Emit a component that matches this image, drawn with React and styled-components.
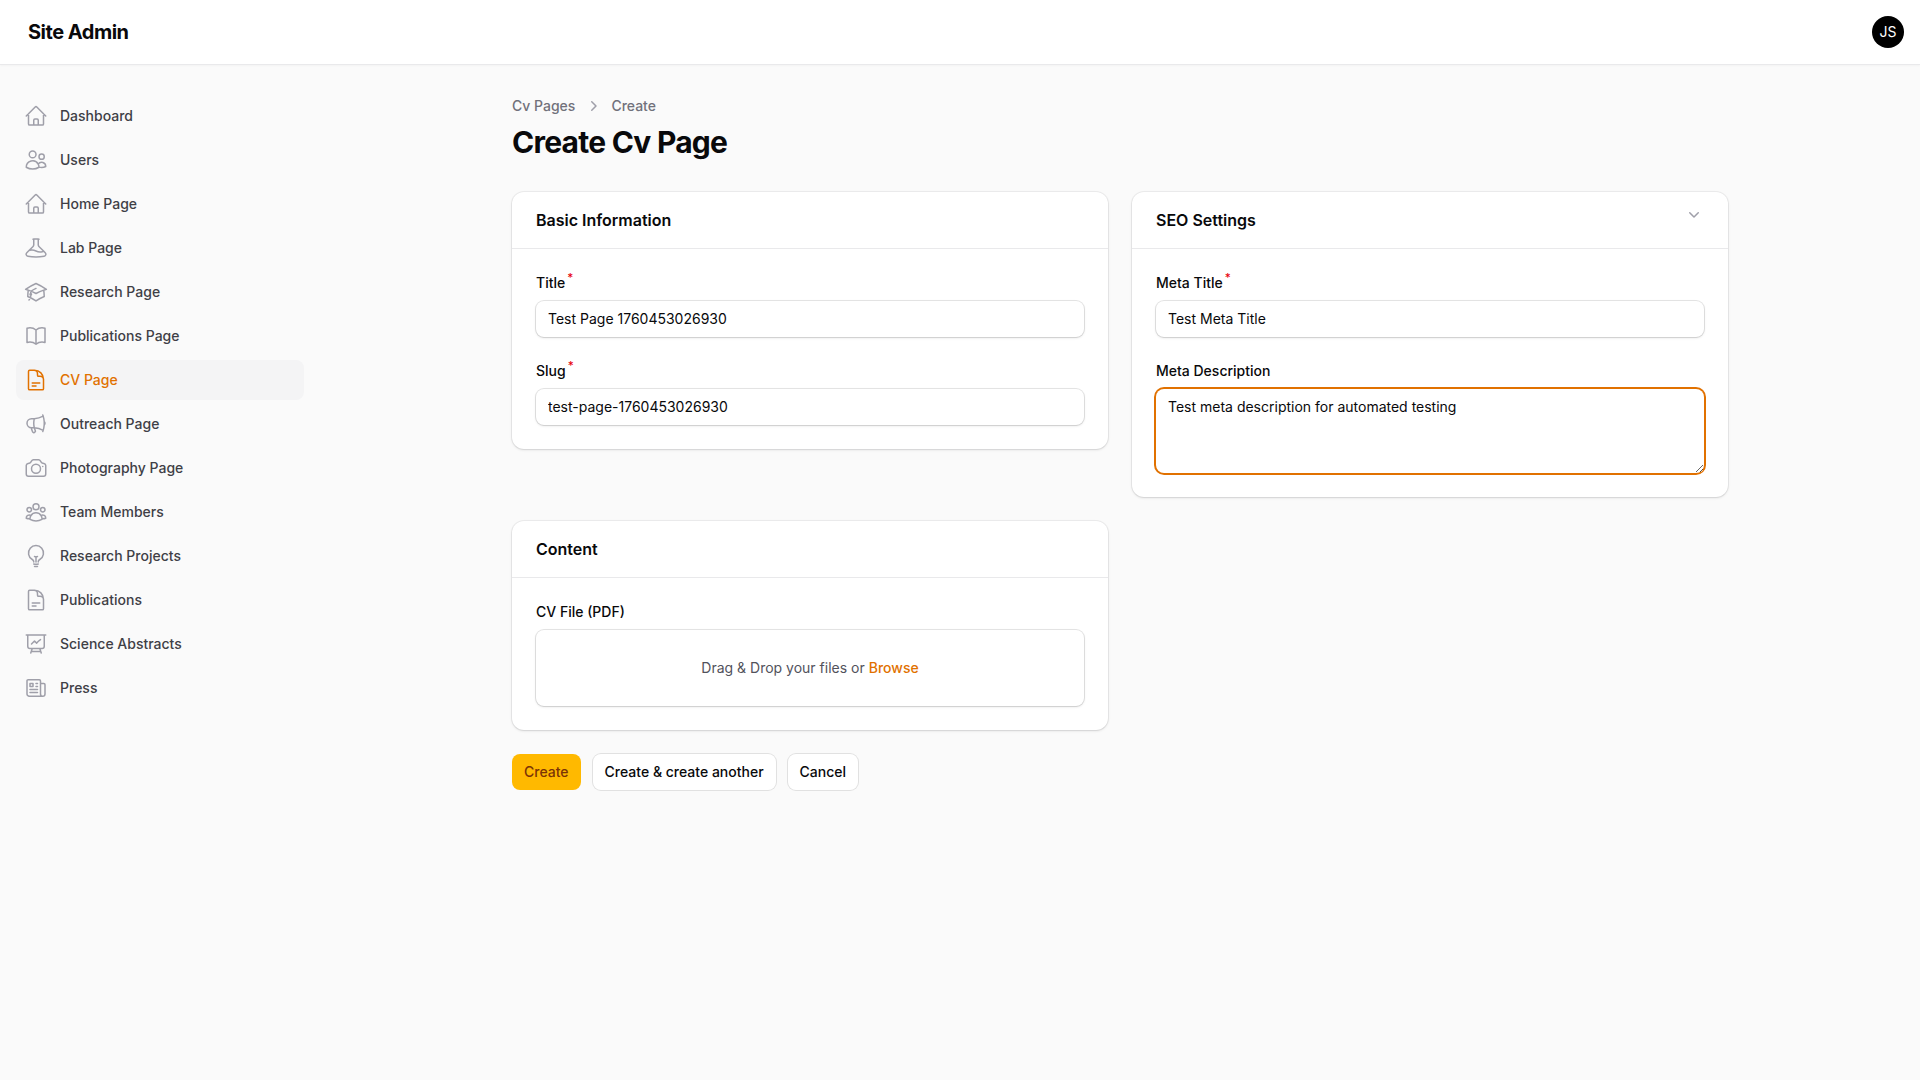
import * as React from 'react';
import styled, { createGlobalStyle } from 'styled-components';
import {
  HiOutlineHome,
  HiOutlineUsers,
  HiOutlineBeaker,
  HiOutlineAcademicCap,
  HiOutlineBookOpen,
  HiOutlineDocumentText,
  HiOutlineMegaphone,
  HiOutlineCamera,
  HiOutlineUserGroup,
  HiOutlineLightBulb,
  HiOutlinePresentationChartLine,
  HiOutlineNewspaper,
  HiMiniChevronRight,
  HiMiniChevronDown,
} from 'react-icons/hi2';

const AMBER = '#e17100';
const SHADOW_SM = '0 1px 3px rgba(0, 0, 0, 0.1), 0 1px 2px -1px rgba(0, 0, 0, 0.1)';

const navItems = [
  { label: 'Dashboard', icon: HiOutlineHome },
  { label: 'Users', icon: HiOutlineUsers },
  { label: 'Home Page', icon: HiOutlineHome },
  { label: 'Lab Page', icon: HiOutlineBeaker },
  { label: 'Research Page', icon: HiOutlineAcademicCap },
  { label: 'Publications Page', icon: HiOutlineBookOpen },
  { label: 'CV Page', icon: HiOutlineDocumentText, active: true },
  { label: 'Outreach Page', icon: HiOutlineMegaphone },
  { label: 'Photography Page', icon: HiOutlineCamera },
  { label: 'Team Members', icon: HiOutlineUserGroup },
  { label: 'Research Projects', icon: HiOutlineLightBulb },
  { label: 'Publications', icon: HiOutlineDocumentText },
  { label: 'Science Abstracts', icon: HiOutlinePresentationChartLine },
  { label: 'Press', icon: HiOutlineNewspaper },
];

const GlobalStyle = createGlobalStyle`
  html, body {
    margin: 0;
    background: #fafafa;
    font-family: Inter, 'Liberation Sans', sans-serif;
    color: #09090b;
  }

  * {
    box-sizing: border-box;
  }
`;

const Page = styled.div`
  min-height: 1080px;
`;

const Topbar = styled.header`
  height: 65px;
  display: flex;
  align-items: center;
  justify-content: space-between;
  padding: 0 16px 1px 28px;
  background: #fff;
  border-bottom: 1px solid #e9e9eb;
  box-shadow: 0 1px 2px rgba(0, 0, 0, 0.03);
`;

const Brand = styled.div`
  font-size: 20px;
  line-height: 20px;
  font-weight: 700;
  letter-spacing: -0.5px;
  color: #09090b;
`;

const Avatar = styled.div`
  width: 32px;
  height: 32px;
  border-radius: 50%;
  display: flex;
  align-items: center;
  justify-content: center;
  background: #000;
  color: #fff;
  font-size: 14px;
  font-weight: 400;
`;

const Shell = styled.div`
  display: grid;
  grid-template-columns: 320px 1fr;
`;

const Sidebar = styled.nav`
  display: flex;
  flex-direction: column;
  gap: 4px;
  padding: 31px 16px;
`;

const NavItem = styled.a`
  height: 40px;
  display: flex;
  align-items: center;
  gap: 12px;
  padding: 0 8px;
  border-radius: 8px;
  font-size: 14px;
  font-weight: 500;
  color: ${p => (p.$active ? AMBER : '#3f3f46')};
  background: ${p => (p.$active ? '#f4f4f5' : 'transparent')};

  svg {
    width: 24px;
    height: 24px;
    flex-shrink: 0;
    color: ${p => (p.$active ? AMBER : '#9f9fa9')};
  }
`;

const NavLabel = styled.span`
  line-height: 20px;
  margin-bottom: 1px;
`;

const Main = styled.main`
  width: 100%;
  max-width: 1280px;
  margin: 0 auto;
  padding: 31px 32px;
`;

const Breadcrumbs = styled.div`
  display: flex;
  align-items: center;
  gap: 8px;
  font-size: 14px;
  line-height: 20px;
  font-weight: 500;
  color: #71717b;
  margin-bottom: 8px;

  svg {
    width: 20px;
    height: 20px;
    color: #9f9fa9;
  }
`;

const Heading = styled.h1`
  margin: 0 0 32px;
  font-size: 30px;
  line-height: 36px;
  font-weight: 700;
  letter-spacing: -0.75px;
  color: #09090b;
`;

const FormGrid = styled.div`
  display: grid;
  grid-template-columns: 1fr 1fr;
  gap: 24px;
  align-items: start;
`;

const Card = styled.section`
  background: #fff;
  border-radius: 12px;
  box-shadow: ${SHADOW_SM}, 0 0 0 1px rgba(9, 9, 11, 0.05);
`;

const CardHeader = styled.div`
  height: 57px;
  display: flex;
  align-items: flex-start;
  justify-content: space-between;
  padding: 16px 24px;
  border-bottom: 1px solid #e9e9eb;

  svg {
    width: 20px;
    height: 20px;
    margin-top: -4px;
    color: #9f9fa9;
  }
`;

const CardTitle = styled.h2`
  margin: 0;
  font-size: 16px;
  line-height: 24px;
  font-weight: 600;
  color: #09090b;
`;

const CardBody = styled.div`
  display: flex;
  flex-direction: column;
  gap: 24px;
  padding: 24px;
`;

const Field = styled.div`
  display: flex;
  flex-direction: column;
  gap: 8px;
`;

const Label = styled.label`
  font-size: 14px;
  line-height: 20px;
  font-weight: 500;
  color: #09090b;

  sup {
    margin-left: -1px;
    line-height: 0;
    font-weight: 500;
    color: #e7000b;
  }
`;

const Input = styled.input`
  display: block;
  width: 100%;
  height: 36px;
  padding: 5px 12px 7px;
  border: 0;
  outline: 0;
  border-radius: 8px;
  background: #fff;
  font: 400 14px/24px Inter, 'Liberation Sans', sans-serif;
  color: #09090b;
  box-shadow: ${SHADOW_SM}, 0 0 0 1px rgba(9, 9, 11, 0.1);
`;

const TextArea = styled.textarea`
  display: block;
  width: 100%;
  height: 84px;
  padding: 6px 12px;
  border: 0;
  outline: 0;
  border-radius: 8px;
  background: #fff;
  font: 400 14px/24px Inter, 'Liberation Sans', sans-serif;
  color: #09090b;
  box-shadow: 0 0 0 2px ${AMBER};
`;

const Dropzone = styled.div`
  height: 76px;
  display: flex;
  align-items: center;
  justify-content: center;
  gap: 4px;
  padding-bottom: 2px;
  border-radius: 8px;
  background: #fff;
  font-size: 14px;
  color: #52525c;
  box-shadow: ${SHADOW_SM}, 0 0 0 1px rgba(9, 9, 11, 0.1);
`;

const Browse = styled.span`
  font-weight: 500;
  color: ${AMBER};
`;

const Actions = styled.div`
  display: flex;
  gap: 12px;
  margin-top: 24px;
`;

const Button = styled.button`
  height: 36px;
  padding: 0 12px;
  border: 0;
  border-radius: 8px;
  font: 500 14px/20px Inter, 'Liberation Sans', sans-serif;
  color: ${p => (p.$primary ? '#7b3306' : '#09090b')};
  background: ${p => (p.$primary ? '#ffb900' : '#fff')};
  box-shadow: ${p => (p.$primary ? 'none' : '0 0 0 1px rgba(9, 9, 11, 0.1)')};
`;

const TextField = ({ label, required, value }) => (
  <Field>
    <Label>
      {label}
      {required ? <sup> *</sup> : null}
    </Label>
    <Input value={value} readOnly />
  </Field>
);

export default function App() {
  return (
    <Page>
      <GlobalStyle />
      <Topbar>
        <Brand>Site Admin</Brand>
        <Avatar>JS</Avatar>
      </Topbar>
      <Shell>
        <Sidebar>
          {navItems.map(({ label, icon: Icon, active }) => (
            <NavItem key={label} $active={active}>
              <Icon />
              <NavLabel>{label}</NavLabel>
            </NavItem>
          ))}
        </Sidebar>
        <Main>
          <Breadcrumbs>
            <span>Cv Pages</span>
            <HiMiniChevronRight />
            <span>Create</span>
          </Breadcrumbs>
          <Heading>Create Cv Page</Heading>
          <FormGrid>
            <Card>
              <CardHeader>
                <CardTitle>Basic Information</CardTitle>
              </CardHeader>
              <CardBody>
                <TextField label="Title" required value="Test Page 1760453026930" />
                <TextField label="Slug" required value="test-page-1760453026930" />
              </CardBody>
            </Card>
            <Card>
              <CardHeader>
                <CardTitle>SEO Settings</CardTitle>
                <HiMiniChevronDown />
              </CardHeader>
              <CardBody>
                <TextField label="Meta Title" required value="Test Meta Title" />
                <Field>
                  <Label>Meta Description</Label>
                  <TextArea value="Test meta description for automated testing" readOnly />
                </Field>
              </CardBody>
            </Card>
            <Card>
              <CardHeader>
                <CardTitle>Content</CardTitle>
              </CardHeader>
              <CardBody>
                <Field>
                  <Label>CV File (PDF)</Label>
                  <Dropzone>
                    Drag &amp; Drop your files or <Browse>Browse</Browse>
                  </Dropzone>
                </Field>
              </CardBody>
            </Card>
          </FormGrid>
          <Actions>
            <Button $primary>Create</Button>
            <Button>Create &amp; create another</Button>
            <Button>Cancel</Button>
          </Actions>
        </Main>
      </Shell>
    </Page>
  );
}
